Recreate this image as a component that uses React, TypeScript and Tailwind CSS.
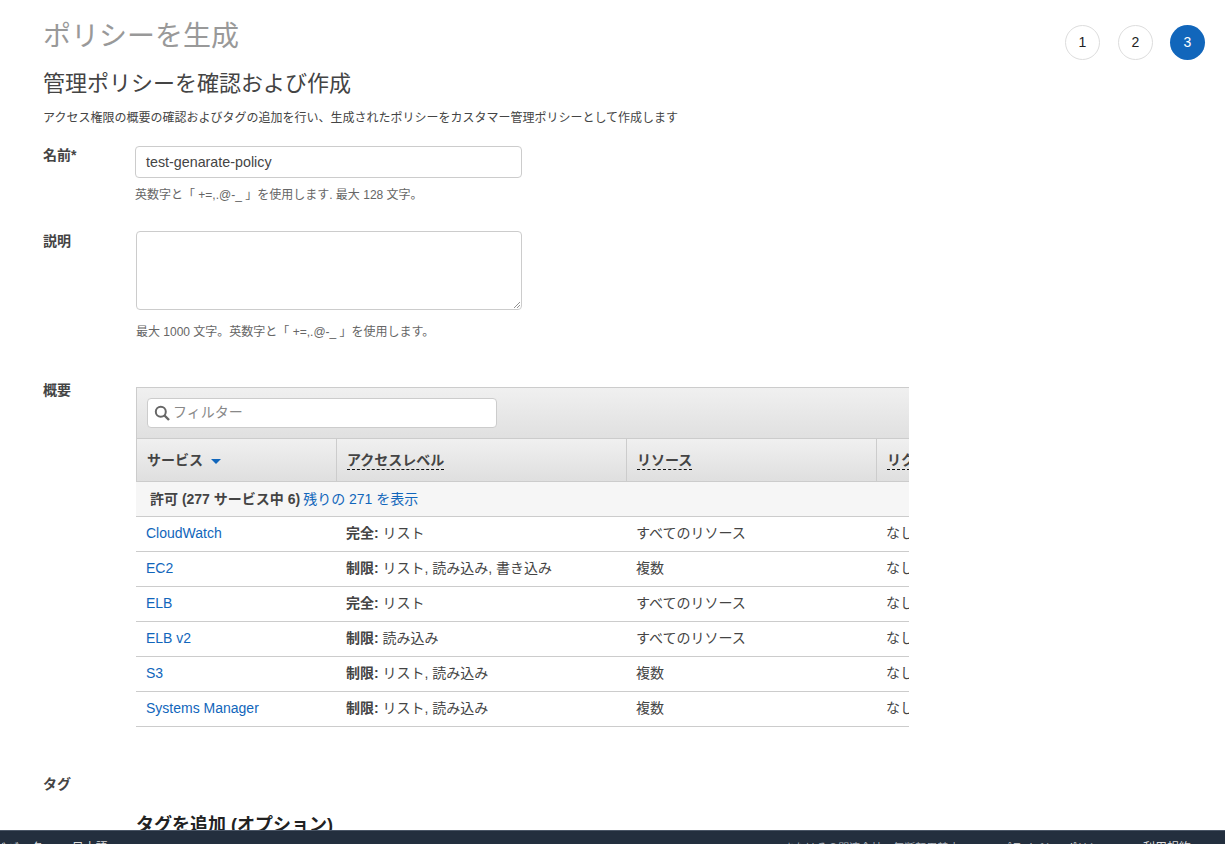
import React from "react";

const font = "font-['Liberation_Sans','Noto_Sans_CJK_JP',sans-serif]";

const rows = [
  ["CloudWatch", "完全:", "リスト", "すべてのリソース"],
  ["EC2", "制限:", "リスト, 読み込み, 書き込み", "複数"],
  ["ELB", "完全:", "リスト", "すべてのリソース"],
  ["ELB v2", "制限:", "読み込み", "すべてのリソース"],
  ["S3", "制限:", "リスト, 読み込み", "複数"],
  ["Systems Manager", "制限:", "リスト, 読み込み", "複数"],
];

function Th({ label, width, dashed, children, last }: { label: string; width: string; dashed?: boolean; children?: React.ReactNode; last?: boolean }) {
  return (
    <div className={`${width} shrink-0 h-full flex items-center pl-[10px] pt-[1px] ${last ? "" : "border-r border-[#cccccc]"}`}>
      <span className={`font-bold text-[14px] text-[#444444] whitespace-nowrap ${dashed ? "border-b border-dashed border-[#111111] leading-[18px]" : ""}`}>{label}</span>
      {children}
    </div>
  );
}

function Step({ n, active, extra }: { n: number; active?: boolean; extra?: string }) {
  return (
    <div className={`w-[35px] h-[35px] rounded-full flex items-center justify-center text-[14px] ${active ? "bg-[#1166bb] text-white" : "border border-[#dddddd] text-[#222222] bg-white"} ${extra ?? ""}`}>{n}</div>
  );
}

export default function App() {
  return (
    <div className={`${font} w-[1225px] h-[844px] overflow-hidden relative bg-white text-[#444444]`}>
      <div className="pl-[43px] pr-[20px] pt-[19px]">
        <div className="flex justify-between">
          <h1 className="text-[28px] leading-[36px] text-[#999999]">ポリシーを生成</h1>
          <div className="flex gap-[17px] pt-[6px]">
            <Step n={1} extra="mr-[1px]" />
            <Step n={2} />
            <Step n={3} active />
          </div>
        </div>
        <h2 className="text-[22px] leading-[28px] text-[#444444] mt-[10px]">管理ポリシーを確認および作成</h2>
        <p className="text-[12px] leading-[16px] mt-[12px] text-[#444444]">アクセス権限の概要の確認およびタグの追加を行い、生成されたポリシーをカスタマー管理ポリシーとして作成します</p>

        <div className="flex mt-[20px]">
          <div className="w-[92px] shrink-0 font-bold text-[14px] leading-[18px]">名前*</div>
          <div>
            <div className="w-[387px] h-[32px] border border-[#cccccc] rounded-[4px] pl-[10px] pt-[2px] flex items-center text-[14.3px] text-[#444444]">test-genarate-policy</div>
            <div className="text-[12px] leading-[16px] mt-[9px] text-[#666666]">英数字と「 +=,.@-_ 」を使用します. 最大 128 文字。</div>
          </div>
        </div>

        <div className="flex mt-[28px]">
          <div className="w-[93px] shrink-0 font-bold text-[14px] leading-[18px] pt-[1px]">説明</div>
          <div>
            <div className="relative w-[386px] h-[79px] border border-[#cccccc] rounded-[4px]">
              <svg className="absolute right-[1px] bottom-[1px]" width="7" height="7" viewBox="0 0 7 7">
                <path d="M1 7 L7 1 M4 7 L7 4" stroke="#777777" strokeWidth="0.8" />
              </svg>
            </div>
            <div className="text-[12px] leading-[16px] mt-[14px] text-[#666666]">最大 1000 文字。英数字と「 +=,.@-_ 」を使用します。</div>
          </div>
        </div>

        <div className="flex mt-[41px]">
          <div className="w-[93px] shrink-0 font-bold text-[14px] leading-[18px]">概要</div>
          <div className="w-[773px] overflow-hidden pt-[6px]">
            <div className="h-[52px] border-t border-b border-l border-[#cccccc] bg-gradient-to-b from-[#f0f0f0] to-[#e0e0e0] pl-[10px] pt-[10px]">
              <div className="w-[350px] h-[30px] bg-white border border-[#cccccc] rounded-[4px] flex items-center pl-[6px] gap-[3px]">
                <svg width="16" height="16" viewBox="0 0 16 16" fill="none" stroke="#666666" strokeWidth="2">
                  <circle cx="6.8" cy="6.8" r="5" />
                  <path d="M10.5 10.5 L15 15" strokeWidth="2.4" />
                </svg>
                <span className="text-[14px] text-[#888888] pb-[1px]">フィルター</span>
              </div>
            </div>
            <div className="h-[43px] flex border-b border-l border-[#cccccc] bg-gradient-to-b from-[#f0f0f0] to-[#dfdfdf]">
              <Th label="サービス" width="w-[200px]">
                <svg className="ml-[8px] mt-[2px]" width="10" height="5" viewBox="0 0 10 5"><path d="M0 0H10L5 5Z" fill="#1166bb" /></svg>
              </Th>
              <Th label="アクセスレベル" width="w-[290px]" dashed />
              <Th label="リソース" width="w-[250px]" dashed />
              <Th label="リクエスト条件" width="w-[200px]" dashed last />
            </div>
            <div className="h-[35px] bg-[#f6f6f6] border-b border-[#cccccc] pl-[14px] flex items-center text-[14px] whitespace-nowrap">
              <span className="font-bold">許可 (277 サービス中 6)</span>
              <a className="text-[#1166bb] ml-[3px]">残りの 271 を表示</a>
            </div>
            {rows.map((r) => (
              <div key={r[0]} className="h-[35px] pb-[2px] flex items-center border-b border-[#cccccc] text-[14px] text-[#444444] whitespace-nowrap">
                <div className="w-[200px] pl-[10px] shrink-0 text-[#1166bb]">{r[0]}</div>
                <div className="w-[290px] pl-[10px] shrink-0"><span className="font-bold">{r[1]}</span> {r[2]}</div>
                <div className="w-[250px] pl-[10px] shrink-0">{r[3]}</div>
                <div className="pl-[10px] shrink-0">なし</div>
              </div>
            ))}
          </div>
        </div>

        <div className="font-bold text-[14px] leading-[18px] mt-[48px]">タグ</div>
        <div className="font-bold text-[18px] leading-[24px] mt-[20px] ml-[93px] text-[#222222]">タグを追加 (オプション)</div>
      </div>

      <div className="absolute left-0 right-0 bottom-0 h-[14px] bg-[#232f3e] border-t border-[#4a5666] text-[12px] text-[#dddddd] overflow-hidden whitespace-nowrap">
        <div className="flex justify-between leading-[16px] pt-[9px]">
          <div className="flex gap-[29px] ml-[-41px]">
            <span>フィードバック</span>
            <span>日本語</span>
          </div>
          <div className="flex items-baseline pr-[34px]">
            <span className="text-[#aab2bc] text-[11px] mr-[30px]">© 2008 - 2021, Amazon Web Services, Inc. またはその関連会社。無断転用禁止。</span>
            <span className="text-[11px] mr-[33px]">プライバシーポリシー</span>
            <span>利用規約</span>
          </div>
        </div>
      </div>
    </div>
  );
}
